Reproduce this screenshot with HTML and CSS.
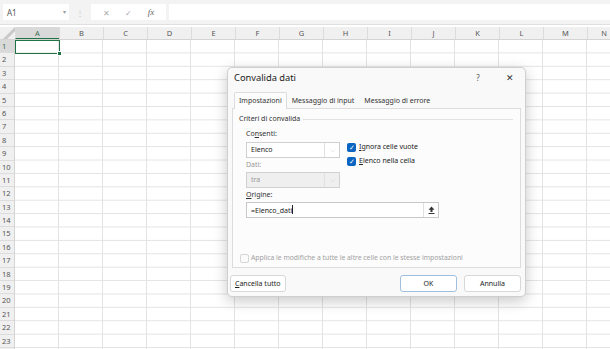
FILE: index.html
```html
<!DOCTYPE html>
<html lang="it">
<head>
    <meta charset="UTF-8">
    <title>Convalida dati</title>
    <link rel="stylesheet" href="styles.css">
</head>
<body>
    <div class="toolbar">
        <div class="name-box"><span>A1</span><span class="name-caret">▾</span></div>
        <div class="grip">⋮</div>
        <div class="fx-box">
            <span class="fx-icon">✕</span>
            <span class="fx-icon">✓</span>
            <span class="fx-label">fx</span>
        </div>
        <div class="formula"></div>
    </div>

    <div class="sheet">
        <div class="col-heads">
            <div class="corner"></div>
            <div class="col-head sel">A</div>
            <div class="col-head">B</div>
            <div class="col-head">C</div>
            <div class="col-head">D</div>
            <div class="col-head">E</div>
            <div class="col-head">F</div>
            <div class="col-head">G</div>
            <div class="col-head">H</div>
            <div class="col-head">I</div>
            <div class="col-head">J</div>
            <div class="col-head">K</div>
            <div class="col-head">L</div>
            <div class="col-head">M</div>
            <div class="col-head last">N</div>
        </div>
        <div class="body-rows">
            <div class="row-heads">
                <div class="row-head sel">1</div>
                <div class="row-head">2</div>
                <div class="row-head">3</div>
                <div class="row-head">4</div>
                <div class="row-head">5</div>
                <div class="row-head">6</div>
                <div class="row-head">7</div>
                <div class="row-head">8</div>
                <div class="row-head">9</div>
                <div class="row-head">10</div>
                <div class="row-head">11</div>
                <div class="row-head">12</div>
                <div class="row-head">13</div>
                <div class="row-head">14</div>
                <div class="row-head">15</div>
                <div class="row-head">16</div>
                <div class="row-head">17</div>
                <div class="row-head">18</div>
                <div class="row-head">19</div>
                <div class="row-head">20</div>
                <div class="row-head">21</div>
                <div class="row-head">22</div>
                <div class="row-head">23</div>
            </div>
            <div class="cells">
                <div class="active-cell"></div>
            </div>
        </div>
    </div>

    <div class="dialog">
        <div class="dlg-title">
            <span>Convalida dati</span>
            <span class="dlg-help">?</span>
            <span class="dlg-close">✕</span>
        </div>
        <div class="tabs">
            <div class="tab active">Impostazioni</div>
            <div class="tab">Messaggio di input</div>
            <div class="tab">Messaggio di errore</div>
        </div>
        <div class="panel">
            <div class="group-title"><span>Criteri di convalida</span><span class="group-line"></span></div>
            <div class="form-top">
                <div class="form-col">
                    <div class="lbl">Co<u>n</u>senti:</div>
                    <div class="select"><span>Elenco</span><span class="sel-btn">⌵</span></div>
                    <div class="lbl dim">Dati:</div>
                    <div class="select disabled"><span>tra</span><span class="sel-btn">⌵</span></div>
                </div>
                <div class="checks">
                    <div class="check-row"><span class="box on">✓</span><span><u>I</u>gnora celle vuote</span></div>
                    <div class="check-row"><span class="box on">✓</span><span><u>E</u>lenco nella cella</span></div>
                </div>
            </div>
            <div class="lbl origin"><u>O</u>rigine:</div>
            <div class="source">
                <span>=Elenco_dati<span class="cursor"></span></span>
                <span class="src-btn">
                    <svg width="7" height="8" viewBox="0 0 7 8"><path d="M3.5 0.5 L6.5 3.8 H4.5 V6 H2.5 V3.8 H0.5 Z" fill="#333"/><rect x="0.5" y="7" width="6" height="1" fill="#333"/></svg>
                </span>
            </div>
            <div class="apply-row"><span class="box off"></span><span>Applica le modifiche a tutte le altre celle con le stesse impostazioni</span></div>
        </div>
        <div class="footer">
            <div class="btn"><u>C</u>ancella tutto</div>
            <div class="footer-right">
                <div class="btn wide default">OK</div>
                <div class="btn wide">Annulla</div>
            </div>
        </div>
    </div>
</body>
</html>
```

FILE: styles.css
```css
body {
    margin: 0;
    width: 610px;
    height: 349px;
    overflow: hidden;
    background: #ffffff;
    font-family: "Noto Sans", "Open Sans", sans-serif;
    color: #222;
    position: relative;
}

.toolbar {
    height: 24px;
    background: #f3f3f3;
    display: flex;
    align-items: center;
    border-bottom: 1px solid #e0e0e0;
}

.name-box {
    margin-left: 3px;
    width: 66px;
    height: 16px;
    background: #fff;
    display: flex;
    align-items: center;
    justify-content: space-between;
    padding: 0 3px 0 4px;
    box-sizing: border-box;
    font-size: 8px;
    color: #555;
}

.name-caret {
    font-size: 6px;
    color: #999;
}

.grip {
    width: 22px;
    text-align: center;
    font-size: 8px;
    color: #bbb;
}

.fx-box {
    width: 75px;
    height: 16px;
    background: #fff;
    display: flex;
    align-items: center;
    justify-content: space-around;
    padding: 0 4px;
    box-sizing: border-box;
}

.fx-icon {
    font-size: 8px;
    color: #aaa;
}

.fx-label {
    font-family: "Liberation Serif", serif;
    font-style: italic;
    font-size: 9px;
    color: #666;
}

.formula {
    flex: 1;
    height: 16px;
    margin-left: 3px;
    background: #fff;
}

.sheet {
    margin-top: 2px;
}

.col-heads {
    display: flex;
    height: 13px;
    background: #f0f0f0;
    border-bottom: 1px solid #d4d4d4;
    box-sizing: border-box;
}

.corner {
    width: 15px;
    flex: none;
    background: linear-gradient(135deg, transparent 55%, #c8c8c8 56%, #c8c8c8 70%, transparent 71%);
}

.col-head {
    width: 44px;
    flex: none;
    box-sizing: border-box;
    border-left: 1px solid #dcdcdc;
    font-size: 7.5px;
    color: #555;
    text-align: center;
    line-height: 12px;
}

.col-head.last {
    width: 22px;
    text-align: right;
    padding-right: 2px;
}

.col-head.sel {
    background: #d9d9d9;
    color: #3b6e4a;
    border-bottom: 1px solid #217346;
}

.body-rows {
    display: flex;
}

.row-heads {
    width: 15px;
    flex: none;
    background: #f0f0f0;
    border-right: 1px solid #d4d4d4;
    box-sizing: border-box;
}

.row-head {
    height: 13.4px;
    box-sizing: border-box;
    border-bottom: 1px solid #dcdcdc;
    font-size: 7.5px;
    color: #555;
    padding-left: 2px;
    line-height: 12.4px;
}

.row-head.sel {
    background: #d9d9d9;
    color: #3b6e4a;
}

.cells {
    flex: 1;
    height: 309px;
    position: relative;
    background-image:
        linear-gradient(to right, transparent 43px, #e3e3e3 43px),
        linear-gradient(to bottom, transparent 12.4px, #e3e3e3 12.4px);
    background-size: 44px 100%, 100% 13.4px;
}

.active-cell {
    position: absolute;
    left: 0;
    top: 0;
    width: 45px;
    height: 14px;
    box-sizing: border-box;
    border: 1.5px solid #217346;
}

.active-cell::after {
    content: "";
    position: absolute;
    right: -3px;
    bottom: -3px;
    width: 3px;
    height: 3px;
    background: #217346;
    border: 1px solid #fff;
}

/* dialog */

.dialog {
    position: absolute;
    left: 227px;
    top: 67px;
    width: 299px;
    height: 230px;
    box-sizing: border-box;
    background: #f9f9f9;
    border: 1px solid #cfcfcf;
    border-radius: 5px;
    box-shadow: 0 4px 14px rgba(0, 0, 0, 0.22);
    font-size: 7px;
    line-height: 10px;
    display: flex;
    flex-direction: column;
}

.dlg-title {
    height: 19px;
    display: flex;
    align-items: center;
    padding: 0 0 0 6px;
    font-size: 9.3px;
    color: #1a1a1a;
}

.dlg-title span:first-child {
    flex: 1;
}

.dlg-help {
    width: 34px;
    text-align: center;
    color: #555;
    font-size: 8px;
}

.dlg-close {
    width: 30px;
    text-align: center;
    color: #333;
    font-size: 9px;
}

.tabs {
    display: flex;
    align-items: flex-end;
    margin: 5px 0 0 6px;
    height: 16px;
}

.tab {
    padding: 0 5px;
    height: 14px;
    line-height: 14px;
    color: #333;
}

.tab.active {
    padding: 0 4px;
    height: 16px;
    line-height: 16px;
    background: #fcfcfc;
    border: 1px solid #dcdcdc;
    border-bottom: none;
    border-radius: 2px 2px 0 0;
    margin-bottom: -1px;
    position: relative;
    z-index: 1;
}

.panel {
    margin: 0 4px 0 4px;
    height: 160px;
    background: #fcfcfc;
    border: 1px solid #dcdcdc;
    box-sizing: border-box;
    padding: 5px 7px 0 6px;
}

.group-title {
    display: flex;
    align-items: center;
    gap: 3px;
    color: #333;
}

.group-line {
    flex: 1;
    height: 1px;
    background: #e2e2e2;
}

.form-top {
    display: flex;
    gap: 7px;
    padding-left: 7px;
    margin-top: 5px;
}

.form-col {
    width: 94px;
}

.lbl {
    height: 10px;
    color: #333;
}

.lbl.origin {
    padding-left: 7px;
    margin-top: 2px;
}

.lbl.dim {
    color: #999;
}

.select {
    height: 16px;
    margin: 3px 0 2px 0;
    box-sizing: border-box;
    border: 1px solid #d0d0d0;
    background: #fff;
    display: flex;
    align-items: center;
    justify-content: space-between;
    padding-left: 4px;
    color: #222;
}

.lbl.dim + .select {
    margin: 2px 0 0 0;
}

.select.disabled {
    background: #efefef;
    color: #999;
}

.sel-btn {
    width: 14px;
    height: 100%;
    border-left: 1px solid #e0e0e0;
    text-align: center;
    color: #aaa;
    font-size: 7px;
    line-height: 13px;
}

.checks {
    padding-top: 11px;
}

.check-row {
    display: flex;
    align-items: center;
    gap: 3px;
    height: 14px;
    color: #222;
}

.box {
    width: 9px;
    height: 9px;
    box-sizing: border-box;
    border-radius: 2px;
    font-size: 7px;
    line-height: 9px;
    text-align: center;
    flex: none;
}

.box.on {
    background: #0a64c2;
    color: #fff;
}

.box.off {
    border: 1px solid #d6d6d6;
    background: #fafafa;
}

.source {
    margin: 2px 0 0 7px;
    width: 193px;
    height: 16px;
    box-sizing: border-box;
    border: 1px solid #c8c8c8;
    background: #fff;
    display: flex;
    align-items: center;
    justify-content: space-between;
    padding-left: 4px;
    color: #222;
}

.cursor {
    display: inline-block;
    width: 1px;
    height: 9px;
    background: #222;
    vertical-align: -1px;
}

.src-btn {
    width: 14px;
    height: 100%;
    display: flex;
    align-items: center;
    justify-content: center;
    border-left: 1px solid #e0e0e0;
}

.apply-row {
    display: flex;
    align-items: center;
    gap: 2px;
    margin-top: 35px;
    padding-left: 1px;
    font-size: 6.8px;
    color: #a0a0a0;
}

.footer {
    display: flex;
    justify-content: space-between;
    padding: 7px 4px 0 2px;
}

.footer-right {
    display: flex;
    gap: 7px;
}

.btn {
    height: 17px;
    line-height: 15px;
    box-sizing: border-box;
    padding: 0 4px;
    background: #fff;
    border: 1px solid #d8d8d8;
    border-radius: 3px;
    color: #222;
    text-align: center;
}

.btn.wide {
    width: 57px;
}

.btn.default {
    border-color: #9fbfdf;
}
```
